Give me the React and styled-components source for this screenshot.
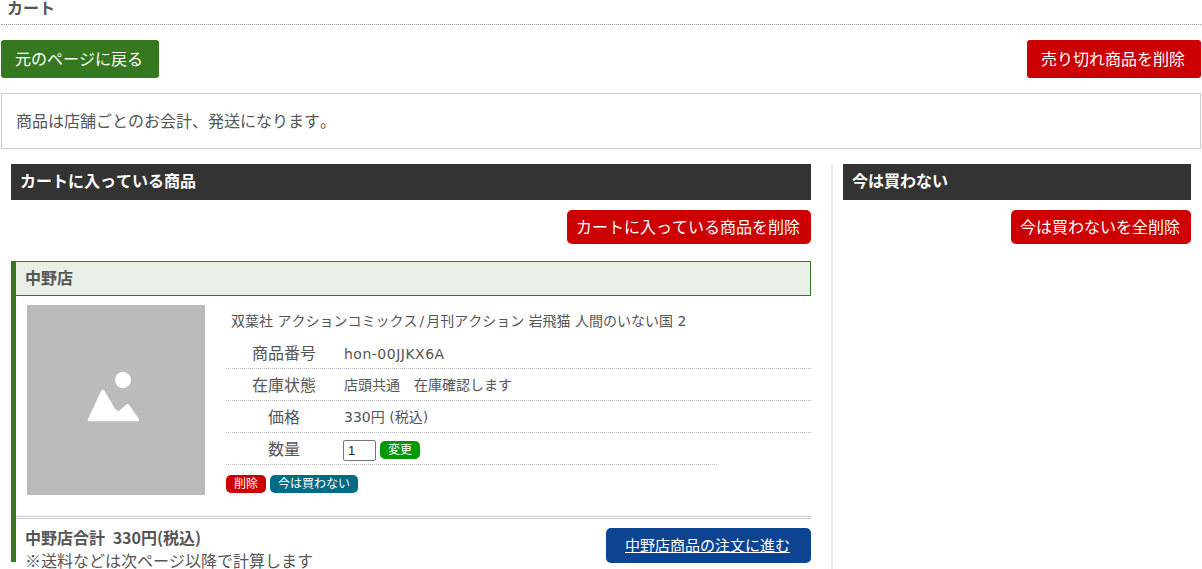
import React from 'react';
import styled, { createGlobalStyle } from 'styled-components';

const GlobalStyle = createGlobalStyle`
  html, body {
    margin: 0;
    height: 100%;
    overflow: hidden;
    background: #fff;
  }
  body {
    font-family: "DejaVu Sans", "Noto Sans CJK JP", sans-serif;
    font-size: 16px;
    font-kerning: none;
    color: #555;
  }
  * { box-sizing: border-box; }
`;

const Page = styled.div`
  width: 1202px;
  height: 569px;
  overflow: hidden;
`;

const PageTitle = styled.h1`
  margin: 0 1px;
  height: 25px;
  padding: 0 6px;
  border-bottom: 1px dotted #999;
  font-size: 16px;
  line-height: 18px;
  font-weight: 700;
`;

const TopBar = styled.div`
  display: flex;
  justify-content: space-between;
  padding: 15px 1px;
`;

const Button = styled.button`
  display: block;
  height: ${p => p.$height || 34}px;
  padding: 1px ${p => (p.$pad || 10) + 1}px 0 ${p => (p.$pad || 10) - 1}px;
  border: 0;
  border-radius: ${p => p.$radius || 5}px;
  background: ${p => p.$bg || '#cc0000'};
  color: #fff;
  font-family: inherit;
  font-size: ${p => p.$size || 16}px;
  font-kerning: none;
  line-height: 1;
  text-decoration: ${p => (p.$underline ? 'underline' : 'none')};
`;

const OrderButton = styled(Button)`
  margin-top: 2px;
`;

const Notice = styled.div`
  margin: 0 1px;
  height: 56px;
  padding: 0 14px 2px;
  border: 1px solid #ccc;
  display: flex;
  align-items: center;
  font-size: 16px;
`;

const Columns = styled.div`
  display: flex;
  padding: 15px 11px 0;
`;

const LeftColumn = styled.section`
  width: 800px;
  margin-right: 20px;
`;

const RightColumn = styled.section`
  width: 360px;
  height: 420px;
  border-left: 2px solid #eee;
  padding-left: 10px;
`;

const SectionTitle = styled.h2`
  margin: 0;
  height: 36px;
  padding: 0 9px;
  background: #333;
  color: #fff;
  font-size: 16px;
  line-height: 36px;
  font-weight: 700;
`;

const SectionActions = styled.div`
  display: flex;
  justify-content: flex-end;
  padding-top: 10px;
`;

const ShopCard = styled.div`
  margin-top: 17px;
  height: 301px;
  border-left: 5px solid #35781f;
`;

const ShopName = styled.h3`
  margin: 0;
  height: 35px;
  padding: 0 9px;
  border: 1px solid #35781f;
  border-left: 0;
  background: #e8f0e8;
  font-size: 16px;
  line-height: 34px;
  font-weight: 700;
`;

const Item = styled.div`
  display: flex;
  padding: 9px 0 0 11px;
  height: 223px;
  border-bottom: 3px double #ccc;
`;

const Thumb = styled.div`
  flex: none;
  width: 178px;
  height: 190px;
  background: #bbb;
  display: flex;
  align-items: center;
  justify-content: center;
`;

const ItemBody = styled.div`
  flex: 1;
  margin-left: 21px;
`;

const ItemName = styled.div`
  height: 32px;
  padding-left: 5px;
  font-size: 14px;
  line-height: 32px;
`;

const Slash = styled.span`
  margin: 0 2px;
`;

const Row = styled.div`
  display: flex;
  align-items: center;
  height: 32px;
  padding-bottom: 1px;
  width: ${p => p.$width || '100%'};
  border-bottom: 1px dotted #bbb;
`;

const RowLabel = styled.div`
  width: 116px;
  text-align: center;
  font-size: 16px;
`;

const RowValue = styled.div`
  padding-left: 2px;
  font-size: 14px;
  display: flex;
  align-items: center;
`;

const CodeValue = styled(RowValue)`
  padding-top: 3px;
  letter-spacing: 0.5px;
`;

const QtyInput = styled.input`
  width: 33px;
  height: 21px;
  margin: 5px 0 0 -1px;
  padding: 0 4px;
  border: 1px solid #767676;
  border-radius: 2px;
  font-family: "Liberation Sans", sans-serif;
  font-size: 13px;
  color: #222;
`;

const Badge = styled.span`
  display: inline-block;
  height: 18px;
  padding: 0 8px;
  border-radius: 5px;
  background: ${p => p.$bg};
  color: #fff;
  font-size: 12px;
  line-height: 18px;
`;

const ChangeBadge = styled(Badge)`
  margin: 4px 0 0 4px;
`;

const BadgeRow = styled.div`
  display: flex;
  gap: 4px;
  margin-top: 10px;
`;

const ShopFooter = styled.div`
  display: flex;
  justify-content: space-between;
  padding: 7px 0 0 9px;
`;

const TotalText = styled.div`
  font-family: "Noto Sans CJK JP", sans-serif;
  font-size: 16px;
  line-height: 23px;
`;

const Total = styled.div`
  font-weight: 700;
  word-spacing: 4px;
`;

const MountainIcon = () => (
  <svg width="60" height="56" viewBox="0 0 60 56">
    <circle cx="37" cy="8" r="8" fill="#fff" />
    <path
      d="M16.8 19 L3.2 47.8 H51.8 L41.7 33.5 L33 41 L28 38 Z"
      fill="#fff"
      stroke="#fff"
      strokeWidth="3"
      strokeLinejoin="round"
    />
  </svg>
);

const rows = [
  { label: '在庫状態', value: '店頭共通　在庫確認します' },
  { label: '価格', value: '330円 (税込)' },
];

const App = () => {
  return (
    <Page>
      <GlobalStyle />
      <PageTitle>カート</PageTitle>
      <TopBar>
        <Button $bg="#35781f" $height={38} $pad={15} $radius={3}>元のページに戻る</Button>
        <Button $height={38} $pad={15} $radius={3}>売り切れ商品を削除</Button>
      </TopBar>
      <Notice>商品は店舗ごとのお会計、発送になります。</Notice>
      <Columns>
        <LeftColumn>
          <SectionTitle>カートに入っている商品</SectionTitle>
          <SectionActions>
            <Button>カートに入っている商品を削除</Button>
          </SectionActions>
          <ShopCard>
            <ShopName>中野店</ShopName>
            <Item>
              <Thumb><MountainIcon /></Thumb>
              <ItemBody>
                <ItemName>双葉社 アクションコミックス<Slash>/</Slash>月刊アクション 岩飛猫 人間のいない国 2</ItemName>
                <Row>
                  <RowLabel>商品番号</RowLabel>
                  <CodeValue>hon-00JJKX6A</CodeValue>
                </Row>
                {rows.map(row => (
                  <Row key={row.label}>
                    <RowLabel>{row.label}</RowLabel>
                    <RowValue>{row.value}</RowValue>
                  </Row>
                ))}
                <Row $width="491px">
                  <RowLabel>数量</RowLabel>
                  <RowValue>
                    <QtyInput defaultValue="1" />
                    <ChangeBadge $bg="#009900">変更</ChangeBadge>
                  </RowValue>
                </Row>
                <BadgeRow>
                  <Badge $bg="#cc0000">削除</Badge>
                  <Badge $bg="#006b85">今は買わない</Badge>
                </BadgeRow>
              </ItemBody>
            </Item>
            <ShopFooter>
              <TotalText>
                <Total>中野店合計 330円(税込)</Total>
                ※送料などは次ページ以降で計算します
              </TotalText>
              <OrderButton $bg="#0d4491" $height={35} $pad={20} $size={15} $underline>中野店商品の注文に進む</OrderButton>
            </ShopFooter>
          </ShopCard>
        </LeftColumn>
        <RightColumn>
          <SectionTitle>今は買わない</SectionTitle>
          <SectionActions>
            <Button>今は買わないを全削除</Button>
          </SectionActions>
        </RightColumn>
      </Columns>
    </Page>
  );
};

export default App;
